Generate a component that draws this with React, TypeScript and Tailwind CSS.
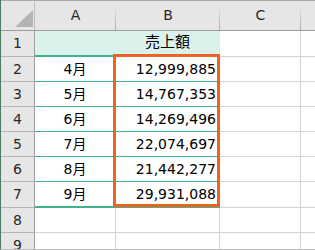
const font = "font-['DejaVu_Sans','Noto_Sans_CJK_JP',sans-serif]"

type Row = { n: number; a?: string; b?: string }

const rows: Row[] = [
  { n: 1, b: "売上額" },
  { n: 2, a: "4月", b: "12,999,885" },
  { n: 3, a: "5月", b: "14,767,353" },
  { n: 4, a: "6月", b: "14,269,496" },
  { n: 5, a: "7月", b: "22,074,697" },
  { n: 6, a: "8月", b: "21,442,277" },
  { n: 7, a: "9月", b: "29,931,088" },
  { n: 8 },
  { n: 9 },
]

function ColHead({ label }: { label: string }) {
  return (
    <div className="relative flex items-center justify-center border-y border-t-[#a9a9a9] border-b-[#9c9c9c] bg-[#e6e6e6] text-[14px] text-[#262626]">
      {label}
      <div className="absolute right-0 top-[5px] bottom-0 w-px bg-gradient-to-b from-[#e6e6e6] to-[#ababab]" />
    </div>
  )
}

function DataRow({ row }: { row: Row }) {
  const inTable = row.n <= 7
  const first = row.n === 1
  const last = row.n === 7
  const green = first || last ? "border-b-2 border-b-[#3fb28f]" : "border-b border-b-[#3fb28f]"
  const ab = inTable ? green : "border-b border-b-[#d4d4d4]"
  const bg = first ? "bg-[#daf2eb] border-r-[#daf2eb]" : "bg-white border-r-[#d4d4d4]"
  return (
    <>
      <div className="flex items-center justify-center border-r border-b border-r-[#9f9f9f] border-b-[#b5b5b5] bg-[#e6e6e6] text-[14px] text-[#262626]">
        {row.n}
      </div>
      <div className={`flex items-center justify-center border-r text-[14px] text-black ${ab} ${bg}`}>{row.a}</div>
      <div
        className={`flex items-center border-r text-black ${ab} ${bg} ${
          first ? "justify-center pb-[2px] text-[15px]" : "justify-end pr-[3px] text-[14px]"
        }`}
      >
        {row.b}
      </div>
      <div className="border-r border-b border-[#d4d4d4] bg-white" />
      <div className="border-b border-[#d4d4d4] bg-white" />
    </>
  )
}

export default function App() {
  return (
    <div className={`relative flex h-[250px] w-[315px] overflow-hidden border-b border-l border-b-[#bcbcbc] border-l-[#4e7a5f] bg-white ${font}`}>
      <div className="grid flex-1 grid-cols-[34px_81px_104px_81px_1fr] grid-rows-[31px_26px_25px_25px_25px_25px_25px_26px_25px_25px]">
        <div className="flex items-end justify-end border-y border-r border-t-[#a9a9a9] border-b-[#9c9c9c] border-r-[#bdbdbd] bg-[#e6e6e6] pr-[1px] pb-[3px]">
          <svg width="18" height="17" viewBox="0 0 18 17">
            <polygon points="18,0 18,17 0,17" fill="#b4b4b4" />
          </svg>
        </div>
        <ColHead label="A" />
        <ColHead label="B" />
        <ColHead label="C" />
        <div className="border-y border-t-[#a9a9a9] border-b-[#9c9c9c] bg-[#e6e6e6]" />
        {rows.map(r => (
          <DataRow key={r.n} row={r} />
        ))}
      </div>
      <div className="absolute left-[112px] top-[54px] h-[153px] w-[107px] border-[3px] border-[#f0621f]" />
    </div>
  )
}
